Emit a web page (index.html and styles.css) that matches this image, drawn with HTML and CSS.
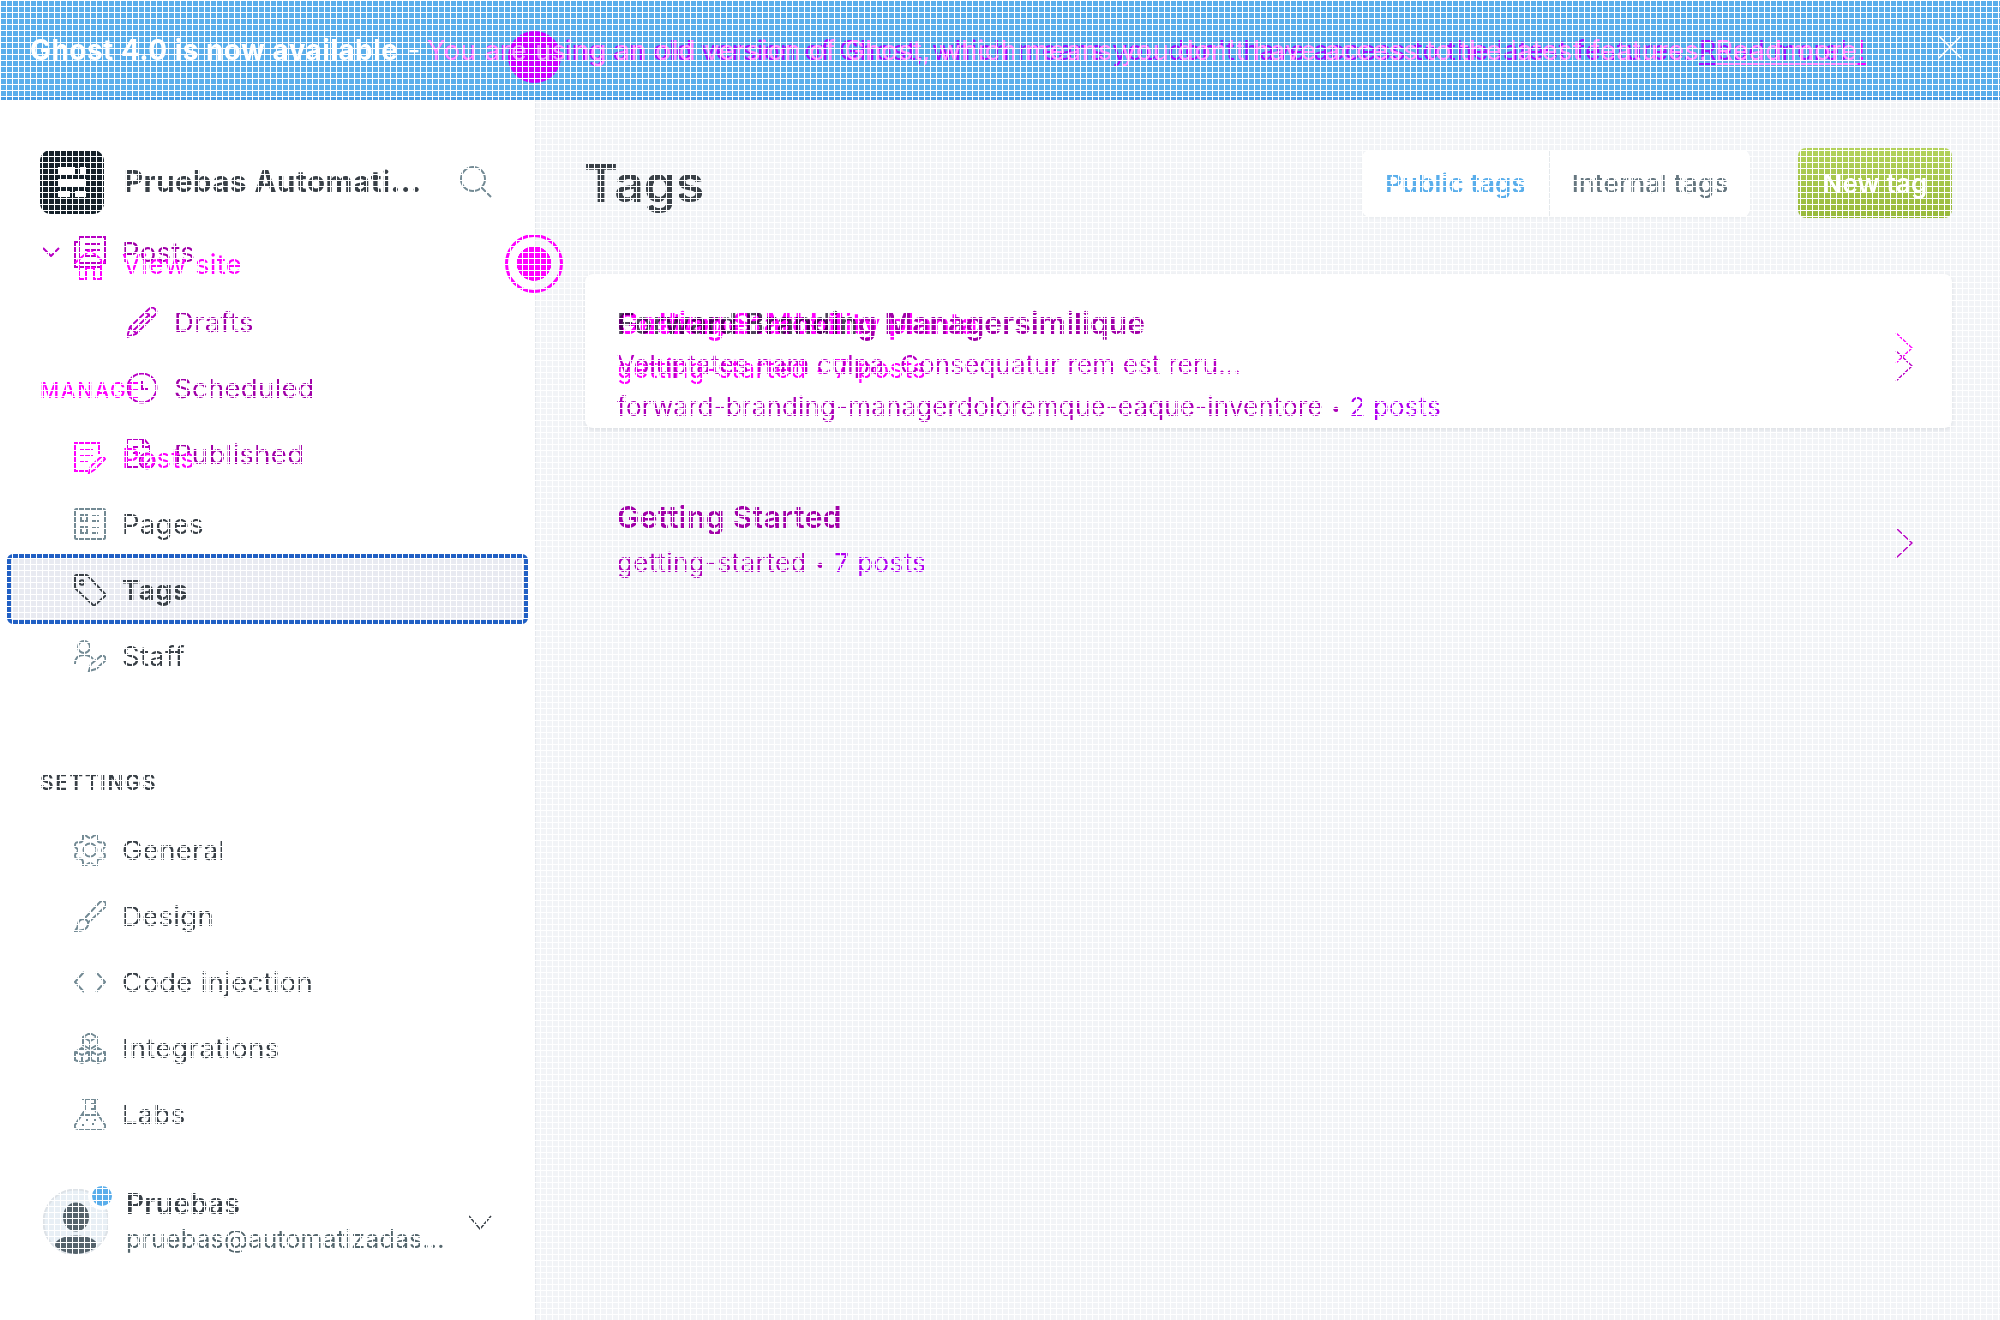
FILE: index.html
```html
<!DOCTYPE html>
<html lang="en">
<head>
<meta charset="utf-8">
<title>Tags</title>
<link rel="stylesheet" href="styles.css">
</head>
<body>
<svg class="defs" width="0" height="0">
  <symbol id="posts" viewBox="0 0 32 32"><path d="M5 1h26v26H5zM5 6H1v25h26v-4M10 8h16M10 14h16M10 20h12"/></symbol>
  <symbol id="pencil" viewBox="0 0 32 32"><path d="M1 31l3-10L23 3q3-3 6 0t0 6L10 28zM4 21l7 7M20 6l7 7M8 24L24 8"/></symbol>
  <symbol id="clock" viewBox="0 0 32 32"><circle cx="16" cy="16" r="14.5"/><path d="M16 9v8h6"/></symbol>
  <symbol id="published" viewBox="0 0 32 32"><path d="M12 29H1V1h17l6 7v6M17 1v8h7M6 9h7M6 15h8"/><circle cx="21" cy="23" r="7.5"/><path d="M17 23l3 3 5-6"/></symbol>
  <symbol id="edit" viewBox="0 0 32 32"><path d="M25 12V1H1v28h13M6 8h13M6 14h13M6 20h8M15 31l2-7 10-9q3-1 4 2L20 28z"/></symbol>
  <symbol id="house" viewBox="0 0 32 32"><path d="M1 15L16 2l15 13M5 13v18h7V20h8v11h7V13"/></symbol>
  <symbol id="pages" viewBox="0 0 32 32"><rect x="1" y="1" width="30" height="30" rx="1.5"/><path d="M7 7h6v6H7zM18 8h7M18 13h7M7 19h6v6H7zM18 20h7M18 25h6"/></symbol>
  <symbol id="tag" viewBox="0 0 32 32"><path d="M1 2.500q0-1.500 1.500-1.500H12q1 0 2 1l17 18q.7 1 0 2l-10 9q-1 1-2 0L2 15q-1-1-1-2z"/><circle cx="8" cy="8.500" r="2.300"/></symbol>
  <symbol id="staff" viewBox="0 0 32 32"><circle cx="10" cy="7" r="6"/><path d="M1 24q0-9 9-9 6 0 9 4M15 31l2-7 10-8q3-1 4 1t0 4l-9 8z"/></symbol>
  <symbol id="gear" viewBox="0 0 32 32"><circle cx="16" cy="16" r="6.500"/><path d="M9 1.500q3-1 4 1 3 3 6 0 1-2 4-1v3q0 4 4 4 4-1 4 3 0 2-2 3-2 2 0 4 2 1 2 3 0 4-4 3-4 0-4 4v3q-3 1-4-1-3-3-6 0-1 2-4 1v-3q0-4-4-4-4 1-4-3 0-2 2-3 2-2 0-4-2-1-2-3 0-4 4-3 4 0 4-4z"/></symbol>
  <symbol id="brush" viewBox="0 0 32 32"><path d="M1 31q3-3 3-7 1-5 6-5 5 1 4 6-1 6-13 6zM11 18L26 2q3-2 5 0t0 5L15 22"/></symbol>
  <symbol id="code" viewBox="0 0 32 32"><path d="M10 6L1 16l9 10M22 6l9 10-9 10"/></symbol>
  <symbol id="cubes" viewBox="0 0 32 32"><path d="M16 1l7 4v8l-7 4-7-4V5zM9 5l7 4 7-4M16 9v8M8 16l7 4v8l-7 3-7-3v-8zM1 20l7 3 7-3M8 23v8M24 16l7 4v8l-7 3-7-3v-8zM17 20l7 3 7-3M24 23v8"/></symbol>
  <symbol id="flask" viewBox="0 0 32 32"><path d="M8 1h16M11 1v11L1 27q-1 4 3 4h24q4 0 3-4L21 12V1M16 6h5M16 11h5M8 17h16M12 22h2M20 22h3M8 27h2M18 26h2"/></symbol>
</svg>

<header class="banner">
  <div class="message"><b>Ghost 4.0 is now available</b><span class="dash">-</span></div>
  <p class="notice before">You are using an old version of Ghost, which means you don't have access to the latest features. <a>Read more!</a></p>
  <p class="notice after">You are using an old version of Ghost, which means you don't have access to the latest features. <a>Read more!</a></p>
  <p class="notice shared">You are using an old version of Ghost, which means you don't have access to the latest features. <a>Read more</a></p>
  <svg class="close" viewBox="0 0 24 24"><path d="M1 1l22 22M23 1L1 23"/></svg>
</header>

<div class="app">
  <aside class="sidebar">
    <div class="site">
      <svg class="logo" viewBox="0 0 64 64"><rect width="64" height="64" rx="11" fill="#15212a"/><path d="M18 17h17v7H18zM40 17h6v7h-6zM18 29h28v7H18zM18 41h12v6H18zM35 41h11v6H35z" fill="#fff"/></svg>
      <strong>Pruebas Automati...</strong>
      <svg class="search" viewBox="0 0 32 32"><circle cx="13" cy="13" r="12"/><path d="M22 22l9 9"/></svg>
    </div>
    <nav class="added">
      <a class="row parent"><svg class="caret" viewBox="0 0 18 10"><path d="M1 1l8 8 8-8"/></svg><svg class="icon"><use href="#posts"/></svg>Posts</a>
      <a class="row child"><svg class="icon"><use href="#pencil"/></svg>Drafts</a>
      <a class="row child"><svg class="icon"><use href="#clock"/></svg>Scheduled</a>
      <a class="row child"><svg class="icon"><use href="#published"/></svg>Published</a>
    </nav>
    <nav class="manage">
      <a class="row"><svg class="icon"><use href="#pages"/></svg>Pages</a>
      <a class="row current"><svg class="icon"><use href="#tag"/></svg>Tags</a>
      <a class="row"><svg class="icon"><use href="#staff"/></svg>Staff</a>
    </nav>
    <h2>SETTINGS</h2>
    <nav>
      <a class="row"><svg class="icon"><use href="#gear"/></svg>General</a>
      <a class="row"><svg class="icon"><use href="#brush"/></svg>Design</a>
      <a class="row"><svg class="icon"><use href="#code"/></svg>Code injection</a>
      <a class="row"><svg class="icon"><use href="#cubes"/></svg>Integrations</a>
      <a class="row"><svg class="icon"><use href="#flask"/></svg>Labs</a>
    </nav>
    <div class="user">
      <div class="avatar">
        <svg viewBox="0 0 66 66"><defs><clipPath id="round"><circle cx="33" cy="33" r="32"/></clipPath></defs><circle cx="33" cy="33" r="32.500" fill="#e8eff5" stroke="#dde2e7"/><g clip-path="url(#round)" fill="#54626b" stroke="none"><ellipse cx="33" cy="28" rx="13" ry="14.500"/><ellipse cx="33" cy="56" rx="21" ry="9.500"/></g></svg>
        <i class="dot"></i>
      </div>
      <div class="who"><b>Pruebas</b><span>pruebas@automatizadas...</span></div>
      <svg class="more" viewBox="0 0 24 15"><path d="M1 1l11 13L23 1"/></svg>
    </div>
    <div class="removed">
      <a class="row view"><svg class="icon"><use href="#house"/></svg>View site</a>
      <h2>MANAGE</h2>
      <a class="row old-posts"><svg class="icon"><use href="#edit"/></svg>Posts</a>
    </div>
  </aside>

  <main>
    <div class="top">
      <h1>Tags</h1>
      <div class="toggle"><span class="on">Public tags</span><span>Internal tags</span></div>
      <button>New tag</button>
    </div>
    <section class="card">
      <div class="entry">
        <h3><span class="same">Forward Brandin</span>g Managersimilique</h3>
        <p>Voluptates nam culpa. Consequatur rem est reru...</p>
        <p class="slug">forward-branding-managerdoloremque-eaque-inventore <small>•</small> <em>2 posts</em></p>
      </div>
      <svg class="arrow" viewBox="0 0 18 32"><path d="M1 1l16 15L1 31"/></svg>
      <div class="ghost">
        <h3>Getting Started</h3>
        <h3 class="second">Customer Mobility planta</h3>
        <p>getting-started <small>•</small> 7 posts</p>
        <svg class="arrow" viewBox="0 0 18 32"><path d="M1 1l16 15L1 31"/></svg>
      </div>
    </section>
    <section class="plain">
      <div class="entry">
        <h3>Getting Started</h3>
        <p class="slug">getting-started <small>•</small> <em>7 posts</em></p>
      </div>
      <svg class="arrow" viewBox="0 0 18 32"><path d="M1 1l16 15L1 31"/></svg>
    </section>
  </main>
</div>
<i class="marker solid"></i>
<i class="marker ring"></i>
<div class="mesh"></div>
</body>
</html>
```
FILE: styles.css
```css
* { box-sizing: border-box; }
body { margin: 0; width: 2000px; height: 1320px; overflow: hidden; position: relative; background: #f2f4f7; color: #394047; font-family: Inter, sans-serif; font-size: 27.5px; letter-spacing: .3px; }
h1, h2, h3, p { margin: 0; }
svg { fill: none; stroke: currentColor; stroke-width: 2; flex: none; }
.defs { position: absolute; }

.banner { position: relative; height: 100px; display: flex; align-items: center; justify-content: space-between; padding: 0 38px 3px 30px; background: #5aaeeb; border-bottom: 3px solid #459ce3; color: #fff; }
.message { display: flex; gap: 9px; line-height: 40px; padding-top: 6px; font-size: 28px; }
.message b { font-weight: 700; letter-spacing: .45px; }
.notice { position: absolute; left: 427px; top: 31px; line-height: 40px; white-space: nowrap; font-size: 27px; }
.notice a { text-decoration: underline; text-decoration-skip-ink: none; text-underline-offset: 3px; text-decoration-thickness: 2px; }
.before { color: #a50cff; letter-spacing: .33px; }
.after { color: #f0f; letter-spacing: .5px; }
.shared { color: #fff; opacity: .55; letter-spacing: .5px; z-index: 2; }
.close { width: 24px; height: 24px; stroke-width: 1.6; }

.app { display: flex; height: 1220px; }
.sidebar { position: relative; width: 535px; background: #fff; padding-top: 49px; display: flex; flex-direction: column; flex: none; }
.site { display: flex; align-items: center; height: 66px; padding: 0 43px 0 40px; }
.logo { width: 64px; height: 64px; stroke: none; }
.site strong { flex: 1; margin-left: 20px; font-size: 29.5px; font-weight: 700; letter-spacing: .5px; line-height: 40px; margin-top: -2px; }
.search { width: 32px; height: 32px; color: #738a94; }
.row { display: flex; align-items: center; height: 66px; padding-left: 74px; gap: 16px; }
.icon { width: 32px; height: 32px; color: #738a94; }
.added { padding-top: 4px; color: #a000a8; }
.added .icon, .added .caret { color: #b800c4; }
.parent { padding-left: 42px; gap: 14px; margin-bottom: 4px; }
.parent .icon { margin-right: 2px; }
.caret { width: 18px; height: 10px; }
.child { padding-left: 126px; }
.manage { padding-top: 4px; }
.current { height: 70px; margin: -3px 7px -1px; padding: 1px 0 0 63px; border: 4px solid #2160c4; border-radius: 6px; background: #e8eaf1; font-weight: 700; }
.current .icon { color: #394047; }
h2 { font-size: 21px; font-weight: 600; letter-spacing: 1.5px; line-height: 30px; padding-left: 40px; }
.sidebar > h2 { margin: 79px 0 19px; }
.user { display: flex; align-items: center; height: 70px; margin-top: 40px; padding: 0 43px; }
.avatar { position: relative; width: 66px; height: 66px; }
.dot { position: absolute; right: -7px; top: -7px; width: 28px; height: 28px; border: 4px solid #fff; border-radius: 50%; background: #5aaeeb; }
.who { flex: 1; margin-left: 17px; display: flex; flex-direction: column; line-height: 35px; }
.who b { font-weight: 600; font-size: 28px; }
.who span { font-size: 25px; letter-spacing: .15px; color: #54666d; }
.more { width: 24px; height: 15px; color: #394047; stroke-width: 1.5; }
.removed { position: absolute; inset: 0; color: #f0f; }
.removed .icon { color: #f0f; }
.removed .row { position: absolute; left: 0; }
.removed .view { top: 131px; }
.removed h2 { position: absolute; top: 276px; font-weight: 500; }
.removed .old-posts { top: 325px; }

main { flex: 1; border-left: 1px solid #e6e9ee; padding: 48px 48px 0 49px; }
.top { display: flex; align-items: center; height: 70px; }
h1 { flex: 1; font-size: 51.5px; font-weight: 600; letter-spacing: 0; margin-left: -1px; }
.toggle { display: flex; width: 388px; height: 67px; margin-right: 48px; border-radius: 8px; background: #fff; box-shadow: 0 1px 3px #1520300c; font-size: 26px; font-weight: 500; letter-spacing: .15px; color: #667780; }
.toggle span { display: flex; align-items: center; justify-content: center; flex: 1; }
.toggle .on { flex: 0 0 188px; border-right: 1px solid #e5e9ec; color: #5aaeeb; font-weight: 600; }
button { width: 154px; height: 70px; border: 0; border-radius: 8px; background: linear-gradient(#b3d25c, #97b93b); color: #fff; font: 600 26px Inter, sans-serif; letter-spacing: .2px; padding: 0; }
.card { position: relative; display: flex; align-items: center; height: 154px; margin-top: 56px; padding: 0 39px 0 32px; border-radius: 8px; background: #fff; box-shadow: 0 2px 5px #15203018; color: #b800c4; }
.entry { flex: 1; }
h3 { font-size: 30px; font-weight: 600; line-height: 36px; letter-spacing: .35px; color: #a000a8; }
p { font-size: 26px; white-space: nowrap; letter-spacing: .42px; }
.card .entry { padding-top: 28px; }
.card .entry h3 { letter-spacing: .13px; }
.card p { line-height: 41px; letter-spacing: .15px; }
.card .slug { line-height: 43px; }
.card h3 { line-height: 41px; }
small { font-size: 17px; margin: 0 1px; vertical-align: 2px; line-height: 0; }
.same { color: #50465c; }
.slug { color: #ac00b8; }
em { font-style: normal; color: #b000f0; }
.arrow { width: 18px; height: 32px; margin: 30px 0 0; stroke-width: 1.5; }
.ghost { position: absolute; inset: 0; mix-blend-mode: multiply; }
.ghost h3, .ghost p, .ghost .arrow { position: absolute; left: 32px; color: #f0f; margin: 0; white-space: nowrap; }
.ghost h3 { top: 29px; }
.ghost .second { font-size: 29px; }
.ghost p { top: 74px; letter-spacing: .42px; }
.ghost .arrow { left: auto; right: 39px; top: 58px; }
.plain { display: flex; align-items: center; margin-top: 74px; padding: 0 39px 0 32px; height: 86px; color: #b800c4; }
.plain .slug { line-height: 56px; }
.plain .arrow { margin: -5px 0 0; }

.marker { position: absolute; border-radius: 50%; }
.solid { left: 508px; top: 31px; width: 53px; height: 52px; background: #cb00ff; z-index: 1; }
.ring { left: 505px; top: 234px; width: 58px; height: 59px; border: 3px solid #f0f; background: radial-gradient(circle, #f0f 17px, transparent 17.5px); }
.mesh { position: absolute; inset: 0; z-index: 3; pointer-events: none; background: linear-gradient(90deg, #fff 1px, transparent 1px) 0 0 / 6px 6px, linear-gradient(#fff 1px, transparent 1px) 0 0 / 6px 6px; }
```
